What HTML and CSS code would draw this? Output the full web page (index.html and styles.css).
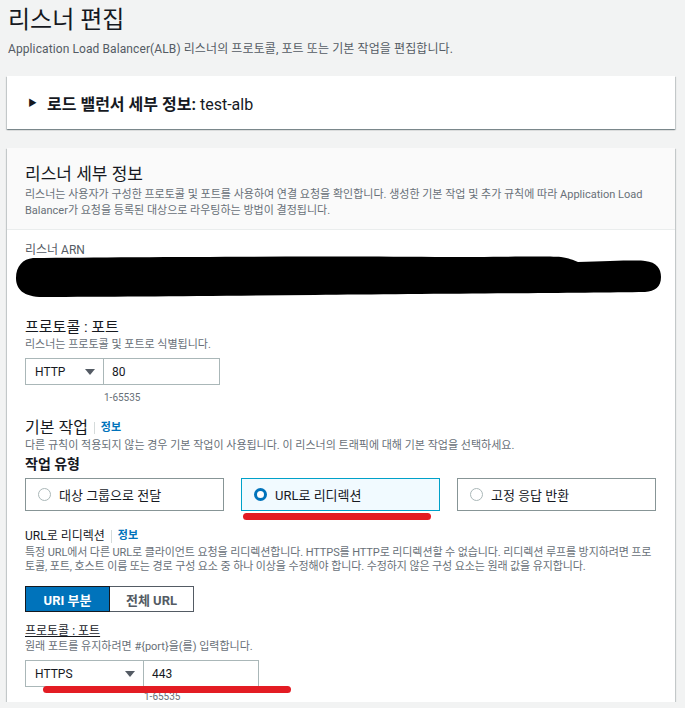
FILE: index.html
```html
<!DOCTYPE html>
<html lang="ko">
<head>
    <meta charset="UTF-8">
    <title>리스너 편집</title>
    <link rel="stylesheet" href="styles.css">
</head>
<body>
    <div class="page-head">
        <h1>리스너 편집</h1>
        <p class="sub">Application Load Balancer(ALB) 리스너의 프로토콜, 포트 또는 기본 작업을 편집합니다.</p>
    </div>

    <div class="card expand">
        <span class="caret">&#9654;</span>
        <span class="expand-title">로드 밸런서 세부 정보: <span class="lb-name">test-alb</span></span>
    </div>

    <div class="card detail">
        <div class="card-head">
            <h2>리스너 세부 정보</h2>
            <p class="desc">리스너는 사용자가 구성한 프로토콜 및 포트를 사용하여 연결 요청을 확인합니다. 생성한 기본 작업 및 추가 규칙에 따라 Application Load Balancer가 요청을 등록된 대상으로 라우팅하는 방법이 결정됩니다.</p>
        </div>

        <div class="card-body">
            <div class="arn-label">리스너 ARN</div>
            <svg class="redact" width="648" height="42" viewBox="0 0 648 42">
                <path d="M18 3 C120 2 300 1 420 2 C480 2 530 1 546 2 C554 3 558 5 563 7 C595 6 624 5 630 6 C642 7 646 14 646 22 C646 32 640 36 630 37 C560 38 400 39 300 40 C200 41 100 42 28 42 C8 42 1 34 1 23 C1 11 8 4 18 3 Z" fill="#000"/>
            </svg>

            <div class="field-title">프로토콜 : 포트</div>
            <div class="hint">리스너는 프로토콜 및 포트로 식별됩니다.</div>
            <div class="combo">
                <div class="select w78">HTTP <span class="arrow"></span></div>
                <div class="input w117">80</div>
            </div>
            <div class="range range1">1-65535</div>

            <div class="section-title">기본 작업 <span class="sep"></span><a class="info">정보</a></div>
            <div class="hint">다른 규칙이 적용되지 않는 경우 기본 작업이 사용됩니다. 이 리스너의 트래픽에 대해 기본 작업을 선택하세요.</div>

            <div class="type-label">작업 유형</div>
            <div class="tiles">
                <div class="tile"><span class="radio"></span>대상 그룹으로 전달</div>
                <div class="tile selected"><span class="radio on"></span>URL로 리디렉션<span class="mark mark1"></span></div>
                <div class="tile"><span class="radio"></span>고정 응답 반환</div>
            </div>

            <div class="small-title">URL로 리디렉션 <span class="sep"></span><a class="info">정보</a></div>
            <div class="hint lines">특정 URL에서 다른 URL로 클라이언트 요청을 리디렉션합니다. HTTPS를 HTTP로 리디렉션할 수 없습니다. 리디렉션 루프를 방지하려면 프로토콜, 포트, 호스트 이름 또는 경로 구성 요소 중 하나 이상을 수정해야 합니다. 수정하지 않은 구성 요소는 원래 값을 유지합니다.</div>

            <div class="segment">
                <div class="seg active">URI 부분</div>
                <div class="seg">전체 URL</div>
            </div>

            <div class="small-title under">프로토콜 : 포트</div>
            <div class="hint">원래 포트를 유지하려면 #{port}을(를) 입력합니다.</div>
            <div class="combo">
                <div class="select w118">HTTPS <span class="arrow"></span></div>
                <div class="input w116">443</div>
                <span class="mark mark2"></span>
            </div>
            <div class="range range2">1-65535</div>
        </div>
    </div>
</body>
</html>
```

FILE: styles.css
```css
body {
    margin: 0;
    background-color: #f2f3f3;
    font-family: Roboto, "Noto Sans CJK KR", sans-serif;
    color: #16191f;
    overflow: hidden;
}
.page-head {
    padding: 4px 8px 0;
}
h1 {
    margin: 0;
    font-size: 24px;
    font-weight: 400;
    line-height: 32px;
}
.sub {
    margin: 5px 0 0;
    font-size: 12px;
    letter-spacing: 0.1px;
    color: #545b64;
    line-height: 16px;
}
.card {
    background: #fff;
    margin: 0 10px 0 7px;
    box-shadow: 0 1px 1px 0 rgba(0, 28, 36, .3), 1px 1px 1px 0 rgba(0, 28, 36, .15), -1px 1px 1px 0 rgba(0, 28, 36, .15);
}
.expand {
    margin-top: 19px;
    height: 53px;
    display: flex;
    align-items: center;
    padding-left: 21px;
}
.caret {
    font-size: 9px;
    margin-right: 10px;
}
.expand-title {
    font-size: 16px;
    font-weight: 700;
}
.lb-name {
    font-weight: 400;
}
.detail {
    margin-top: 19px;
}
.card-head {
    background: #fafafa;
    border-bottom: 1px solid #eaeded;
    padding: 14px 26px 13px 18px;
    height: 54px;
}
h2 {
    margin: 0;
    font-size: 17px;
    font-weight: 400;
    line-height: 24px;
}
.desc {
    margin: 1px 0 0;
    font-size: 11px;
    line-height: 16px;
    color: #687078;
}
.card-body {
    padding: 12px 18px 0 18px;
    height: 460px;
    position: relative;
}
.arn-label {
    font-size: 12px;
    color: #545b64;
    line-height: 16px;
}
.redact {
    display: block;
    margin: -3px 0 0 -10px;
}
.field-title {
    margin-top: 20px;
    font-size: 15px;
    line-height: 20px;
}
.hint {
    font-size: 11px;
    line-height: 15px;
    color: #687078;
}
.combo {
    display: flex;
    margin-top: 6px;
    position: relative;
}
.select, .input {
    height: 25px;
    border: 1px solid #aab7b8;
    display: flex;
    align-items: center;
    font-size: 12px;
    padding: 0 8px;
    box-sizing: content-box;
}
.select {
    justify-content: space-between;
    padding-left: 9px;
}
.input {
    border-left: none;
}
.w78 { width: 60px; }
.w117 { width: 99px; }
.w118 { width: 100px; }
.w116 { width: 98px; }
.arrow {
    width: 0;
    height: 0;
    border-left: 5px solid transparent;
    border-right: 5px solid transparent;
    border-top: 6px solid #545b64;
}
.range {
    font-size: 10px;
    color: #687078;
    line-height: 14px;
    margin-top: 6px;
}
.range1 { padding-left: 79px; }
.range2 { padding-left: 119px; margin-top: 3px; }
.section-title {
    margin-top: 13px;
    font-size: 16px;
    line-height: 20px;
    display: flex;
    align-items: center;
}
.sep {
    display: inline-block;
    width: 1px;
    height: 12px;
    background: #d5dbdb;
    margin: 0 6px 0 6px;
}
.info {
    color: #0073bb;
    font-size: 11px;
    font-weight: 700;
}
.type-label {
    margin-top: 1px;
    font-size: 14px;
    font-weight: 700;
    line-height: 20px;
}
.tiles {
    display: grid;
    grid-template-columns: 199px 199px 199px;
    gap: 17px;
    margin-top: 4px;
}
.tile {
    height: 31px;
    border: 1px solid #879596;
    display: flex;
    align-items: center;
    padding-left: 12px;
    font-size: 13px;
    position: relative;
}
.tile.selected {
    background: #f1faff;
    border-color: #00a1c9;
}
.radio {
    width: 11px;
    height: 11px;
    border: 1px solid #aab7b8;
    border-radius: 50%;
    margin-right: 8px;
}
.radio.on {
    width: 7px;
    height: 7px;
    border: 3px solid #0073bb;
    background: #fff;
}
.mark {
    position: absolute;
    height: 7px;
    background: #e31c23;
    border-radius: 4px;
}
.mark1 {
    left: 1px;
    top: 34px;
    width: 188px;
}
.mark2 {
    left: 18px;
    top: 26px;
    width: 248px;
}
.small-title {
    margin-top: 17px;
    font-size: 12px;
    line-height: 16px;
    display: flex;
    align-items: center;
}
.small-title .sep {
    height: 13px;
}
.lines {
    line-height: 14px;
    margin-top: 2px;
    letter-spacing: -0.1px;
}
.segment {
    display: flex;
    margin-top: 12px;
}
.seg {
    height: 24px;
    border: 1px solid #545b64;
    display: flex;
    align-items: center;
    justify-content: center;
    font-size: 13px;
    font-weight: 700;
    color: #545b64;
    width: 83px;
}
.seg + .seg {
    border-left: none;
}
.seg.active {
    background: #0073bb;
    color: #fff;
    border-color: #16191f;
}
.under {
    margin-top: 11px;
    text-decoration: underline;
}
```
